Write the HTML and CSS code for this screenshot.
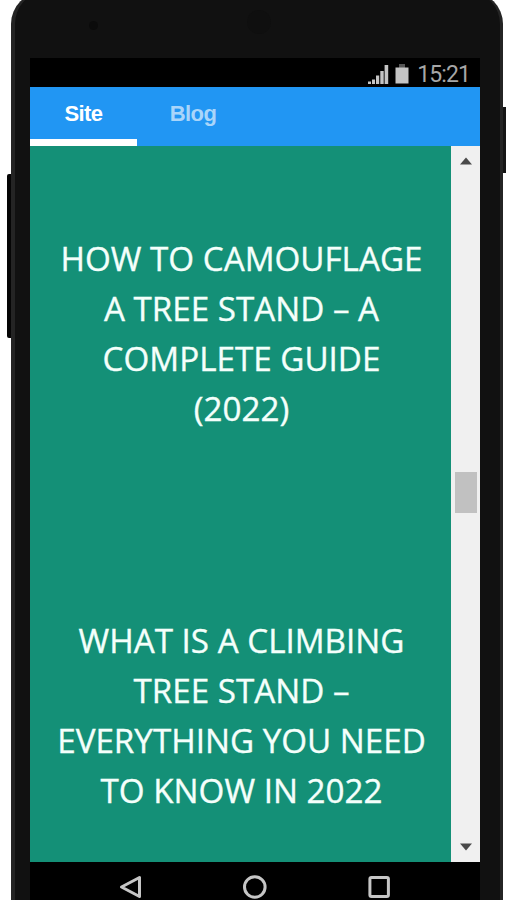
FILE: index.html
```html
<!DOCTYPE html>
<html lang="en">
<head>
<meta charset="utf-8">
<title>Site</title>
<link rel="stylesheet" href="styles.css">
</head>
<body>
<div class="phone">
  <span class="key volume"></span>
  <span class="key power"></span>
  <span class="sensor"></span>
  <span class="speaker"></span>
  <div class="screen">
    <div class="status">
      <svg class="signal" width="22" height="22" viewBox="0 0 22 22"><path d="M1 18.500h3V21H1zM5 16.500h3V21H5zM9 12.500h3.200V21H9zM13.300 8h3.400v13h-3.400zM17.600 2h3.600v19h-3.600z"/></svg>
      <svg class="battery" width="14" height="20" viewBox="0 0 14 20"><path class="cap" d="M4 0h6v4H4z"/><path d="M.5 3.500h13v16H.5z"/></svg>
      <span class="clock">15:21</span>
    </div>
    <nav class="tabs">
      <a class="tab active">Site</a>
      <a class="tab">Blog</a>
    </nav>
    <div class="view">
      <main class="posts">
        <h2>HOW TO CAMOUFLAGE<br>A TREE STAND – A<br>COMPLETE GUIDE<br>(2022)</h2>
        <h2>WHAT IS A CLIMBING<br>TREE STAND –<br>EVERYTHING YOU NEED<br>TO KNOW IN 2022</h2>
      </main>
      <div class="scrollbar">
        <svg width="12" height="8" viewBox="0 0 12 8"><path d="M0 7.500 6 .5l6 7z"/></svg>
        <span class="thumb"></span>
        <svg width="12" height="8" viewBox="0 0 12 8"><path d="M0 .5h12l-6 7z"/></svg>
      </div>
    </div>
    <div class="navbar">
      <svg width="26" height="26" viewBox="0 0 26 26"><path d="M21.500 3.500v19L3.500 13z"/></svg>
      <svg width="26" height="26" viewBox="0 0 26 26"><circle cx="12.800" cy="13" r="10.300"/></svg>
      <svg width="26" height="26" viewBox="0 0 26 26"><rect x="3.900" y="3.500" width="18.500" height="19" rx="1.500"/></svg>
    </div>
  </div>
</div>
</body>
</html>
```
FILE: styles.css
```css
* { box-sizing: border-box; }
html, body { height: 100%; margin: 0; }
body { background: #fff; overflow: hidden; }
.phone {
  position: relative;
  width: 492px;
  height: 940px;
  margin: -8px 0 0 11px;
  padding: 65px 23px 0 19px;
  background: #111;
  border: solid #242424;
  border-width: 1px 3px 0 4px;
  border-radius: 32px 32px 0 0;
}
.key { position: absolute; background: #050505; }
.volume { left: -8px; top: 181px; width: 4px; height: 164px; border-radius: 2px 0 0 2px; }
.power { right: -6px; top: 114px; width: 3px; height: 66px; background: #151515; }
.sensor { position: absolute; left: 74px; top: 28px; width: 9px; height: 9px; border-radius: 50%; background: #0b0b0b; }
.speaker { position: absolute; left: 232px; top: 17px; width: 24px; height: 24px; border-radius: 50%; background: #0f0f0f; }
.screen { width: 450px; margin-left: -4px; height: 874px; display: flex; flex-direction: column; background: #000; }
.status { height: 29px; display: flex; justify-content: flex-end; align-items: center; padding: 3px 10px 0 0; }
.status svg { fill: #c4c4c4; }
.signal { margin: 0 6px 0 0; }
.battery { margin: 0 8px 1px 0; }
.status .cap { fill: #555; }
.clock { padding-top: 1px; font: 23px/26px Roboto, sans-serif; letter-spacing: -.9px; color: #a6a6a6; }
.tabs { height: 59px; flex: none; display: flex; background: #2196f3; }
.tab {
  width: 107px;
  padding-top: 13px;
  text-align: center;
  font: bold 22px/27px "Liberation Sans", sans-serif;
  letter-spacing: -.6px;
  color: #a9d5fa;
}
.tab + .tab { padding-left: 5px; }
.tab.active { color: #fff; border-bottom: 7px solid #fff; }
.view { height: 716px; flex: none; display: flex; }
.posts { width: 421px; padding: 88px 0 0 2px; background: #149077; }
h2 {
  margin: 0 0 182px;
  text-align: center;
  white-space: nowrap;
  font: 400 33.2px/50px "Open Sans", sans-serif;
  color: #f4fffb;
  -webkit-text-stroke: .35px #f4fffb;
}
.scrollbar { width: 29px; display: flex; flex-direction: column; align-items: center; padding: 11px 0; background: #f0f0f0; }
.scrollbar svg { fill: #4a4a4a; }
.thumb { width: 22px; height: 41px; margin: 307px 0 auto; background: #c1c1c1; }
.navbar { height: 50px; display: flex; justify-content: center; gap: 98px; padding: 12px 0 0; }
.navbar svg { fill: none; stroke: #c6c6c6; stroke-width: 3; stroke-linejoin: round; }
```
